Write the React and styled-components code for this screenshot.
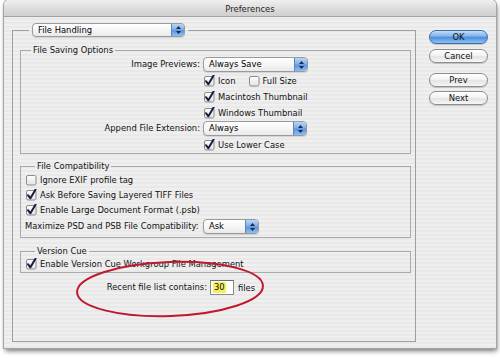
import React from "react";
import styled, { createGlobalStyle } from "styled-components";

const Global = createGlobalStyle`
  html, body { margin: 0; padding: 0; background: #ffffff; }
  body { font-family: "DejaVu Sans", "Liberation Sans", sans-serif; font-size: 8.4px; color: #111; }
  * { box-sizing: border-box; }
`;

const Page = styled.div`
  position: relative;
  width: 500px;
  height: 358px;
  padding-left: 4px;
`;

const Window = styled.div`
  width: 492px;
  height: 348px;
  border-radius: 5px 5px 0 0;
  background: repeating-linear-gradient(180deg, #efefef 0 2px, #e9e9e9 2px 4px);
  box-shadow: 0 0 0 1px #a4a4a4, 1px 3px 5px rgba(0, 0, 0, 0.55);
  display: flex;
  flex-direction: column;
  overflow: hidden;
`;

const TitleBar = styled.div`
  height: 17px;
  flex: none;
  border-bottom: 1px solid #a2a2a2;
  background: linear-gradient(180deg, #f0f0f0 0%, #dcdcdc 55%, #cfcfcf 100%);
  display: flex;
  align-items: center;
  justify-content: center;
  font-size: 8.4px;
  color: #222;
  padding-top: 1px;
`;

const Body = styled.div`
  display: flex;
  padding: 6px 8px 0 8px;
  gap: 13px;
`;

const Outer = styled.fieldset`
  margin: 0;
  width: 404px;
  height: 319px;
  min-width: 0;
  border: 1px solid #9e9e9e;
  padding: 8px 4px 0 7px;
  display: flex;
  flex-direction: column;
`;

const OuterLegend = styled.legend`
  margin-left: 9px;
  padding: 0 3px;
  height: 14px;
  line-height: 14px;
`;

const Group = styled.fieldset`
  margin: ${(p) => p.$mt || 0}px 0 0 0;
  min-width: 0;
  border: 1px solid #a9a9a9;
  padding: ${(p) => p.$pad};
  display: flex;
  flex-direction: column;
  gap: ${(p) => p.$gap ?? 1}px;
`;

const GroupLegend = styled.legend`
  margin-left: 10px;
  padding: 0 2px;
  height: 10px;
  line-height: 10px;
  color: #111;
`;

const FormRow = styled.div`
  display: grid;
  grid-template-columns: ${(p) => p.$label}px auto;
  column-gap: 3px;
  align-items: center;
  height: ${(p) => p.$h || 15}px;
  margin-top: ${(p) => p.$mt || 0}px;
`;

const Label = styled.span`
  text-align: ${(p) => (p.$left ? "left" : "right")};
  white-space: nowrap;
  line-height: 15px;
`;

const Controls = styled.div`
  grid-column: 2;
  display: flex;
  align-items: center;
  gap: 12px;
`;

const Popup = styled.div`
  width: ${(p) => p.$w}px;
  height: ${(p) => p.$h || 15}px;
  display: flex;
  border: 1px solid #9a9a9a;
  border-radius: 4px;
  overflow: hidden;
  background: linear-gradient(180deg, #ffffff 0%, #f6f6f6 50%, #e9e9e9 100%);
  box-shadow: 0 1px 1px rgba(0, 0, 0, 0.12);
`;

const PopupText = styled.span`
  flex: 1;
  padding-left: 5px;
  line-height: ${(p) => (p.$h || 15) - 2}px;
  color: #000;
  white-space: nowrap;
`;

const PopupArrows = styled.span`
  width: 13px;
  flex: none;
  border-left: 1px solid #5f86b8;
  background: linear-gradient(180deg, #b9d6f6 0%, #7fb0ea 45%, #5a95e0 55%, #8cc0f3 100%);
  display: flex;
  align-items: center;
  justify-content: center;
`;

const CheckLine = styled.label`
  display: flex;
  align-items: center;
  gap: 3px;
  height: 15px;
  white-space: nowrap;
  padding-left: ${(p) => p.$indent || 0}px;
`;

const Side = styled.div`
  width: 59px;
  margin-top: 7px;
  display: flex;
  flex-direction: column;
`;

const Button = styled.div`
  height: 14px;
  margin-top: ${(p) => p.$mt || 0}px;
  border-radius: 7px;
  display: flex;
  align-items: center;
  justify-content: center;
  color: #111;
  border: 1px solid ${(p) => (p.$default ? "#3d6ca6" : "#8d8d8d")};
  background: ${(p) =>
    p.$default
      ? "linear-gradient(180deg, #c4def8 0%, #85b6ec 40%, #4f90dd 55%, #8ec3f4 100%)"
      : "linear-gradient(180deg, #ffffff 0%, #f3f3f3 45%, #e4e4e4 55%, #f7f7f7 100%)"};
  box-shadow: 0 1px 1px rgba(0, 0, 0, 0.18);
`;

const NumInput = styled.span`
  width: 24px;
  height: 15px;
  border: 1px solid #8a8a8a;
  border-top-color: #6e6e6e;
  background: #fff;
  display: flex;
  align-items: center;
  padding-left: 2px;
`;

const Highlight = styled.span`
  background: #f4ef5c;
  padding: 0 1px;
  line-height: 11px;
`;

const RecentControls = styled.div`
  grid-column: 2;
  display: flex;
  align-items: center;
  gap: 4px;
`;

const Annotation = styled.svg`
  position: absolute;
  left: 0;
  top: 0;
  pointer-events: none;
`;

function Arrows() {
  return (
    <svg width="7" height="10" viewBox="0 0 7 10">
      <path d="M3.5 1 L6 4 L1 4 Z" fill="#1b2a44" />
      <path d="M3.5 9 L6 6 L1 6 Z" fill="#1b2a44" />
    </svg>
  );
}

function SelectBox({ w, h, children }) {
  return (
    <Popup $w={w} $h={h}>
      <PopupText $h={h}>{children}</PopupText>
      <PopupArrows>
        <Arrows />
      </PopupArrows>
    </Popup>
  );
}

function Box({ checked }) {
  return (
    <svg width="12" height="12" viewBox="0 0 12 12" style={{ flex: "none" }}>
      <defs>
        <linearGradient id="cbg" x1="0" y1="0" x2="0" y2="1">
          <stop offset="0" stopColor="#ffffff" />
          <stop offset="1" stopColor="#e2e2e2" />
        </linearGradient>
      </defs>
      <rect x="1.5" y="1.5" width="9.5" height="9.5" rx="1.5" fill="url(#cbg)" stroke="#8b8b8b" strokeWidth="1" />
      {checked && (
        <path d="M3 6.2 L5.4 9.3 L10.6 0.6" fill="none" stroke="#1b1f3f" strokeWidth="2" strokeLinecap="round" strokeLinejoin="round" />
      )}
    </svg>
  );
}

function Check({ checked, children, indent }) {
  return (
    <CheckLine $indent={indent}>
      <Box checked={checked} />
      <span>{children}</span>
    </CheckLine>
  );
}

export default function App() {
  return (
    <>
      <Global />
      <Page>
        <Window>
          <TitleBar>Preferences</TitleBar>
          <Body>
            <Outer>
              <OuterLegend>
                <SelectBox w={153} h={14}>File Handling</SelectBox>
              </OuterLegend>

              <Group $pad="2px 0 1px 0">
                <GroupLegend>File Saving Options</GroupLegend>
                <FormRow $label={179}>
                  <Label>Image Previews:</Label>
                  <SelectBox w={105}>Always Save</SelectBox>
                </FormRow>
                <FormRow $label={179}>
                  <Controls>
                    <Check checked>Icon</Check>
                    <Check>Full Size</Check>
                  </Controls>
                </FormRow>
                <FormRow $label={179}>
                  <Controls>
                    <Check checked>Macintosh Thumbnail</Check>
                  </Controls>
                </FormRow>
                <FormRow $label={179}>
                  <Controls>
                    <Check checked>Windows Thumbnail</Check>
                  </Controls>
                </FormRow>
                <FormRow $label={179}>
                  <Label>Append File Extension:</Label>
                  <SelectBox w={104}>Always</SelectBox>
                </FormRow>
                <FormRow $label={179}>
                  <Controls>
                    <Check checked>Use Lower Case</Check>
                  </Controls>
                </FormRow>
              </Group>

              <Group $mt={7} $pad="1px 0 3px 4px" $gap={0}>
                <GroupLegend>File Compatibility</GroupLegend>
                <Check>Ignore EXIF profile tag</Check>
                <Check checked>Ask Before Saving Layered TIFF Files</Check>
                <Check checked>Enable Large Document Format (.psb)</Check>
                <FormRow $label={175} $mt={2}>
                  <Label $left>Maximize PSD and PSB File Compatibility:</Label>
                  <SelectBox w={56}>Ask</SelectBox>
                </FormRow>
              </Group>

              <Group $mt={8} $pad="0 0 1px 4px">
                <GroupLegend>Version Cue</GroupLegend>
                <Check checked>Enable Version Cue Workgroup File Management</Check>
              </Group>

              <FormRow $label={187} $mt={7}>
                <Label>Recent file list contains:</Label>
                <RecentControls>
                  <NumInput>
                    <Highlight>30</Highlight>
                  </NumInput>
                  <span>files</span>
                </RecentControls>
              </FormRow>
            </Outer>

            <Side>
              <Button $default>OK</Button>
              <Button $mt={5}>Cancel</Button>
              <Button $mt={10}>Prev</Button>
              <Button $mt={4}>Next</Button>
            </Side>
          </Body>
        </Window>
        <Annotation width="500" height="358" viewBox="0 0 500 358">
          <ellipse cx="170" cy="289" rx="93" ry="27" fill="none" stroke="#c0182f" strokeWidth="2" transform="rotate(-2 170 289)" />
        </Annotation>
      </Page>
    </>
  );
}
